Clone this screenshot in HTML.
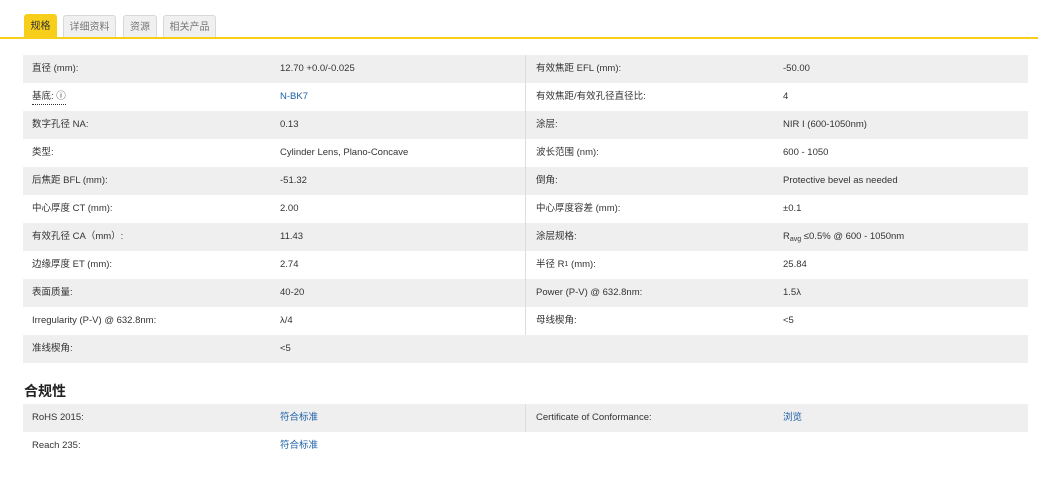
<!DOCTYPE html>
<html><head><meta charset="utf-8"><style>
body{margin:0;background:#fff;font-family:"Liberation Sans","Noto Sans CJK SC",sans-serif;color:#333;font-size:9.5px;}
.tabs{position:absolute;top:14px;left:24px;height:24px;}
.tab{position:absolute;top:1px;height:23px;background:#f0f0f0;border:1px solid #d8d8d8;border-bottom:none;border-radius:3px 3px 0 0;color:#777;font-size:10px;line-height:24px;text-align:center;box-sizing:border-box;}
.tab.on{background:#f7cf1a;border-color:#f7cf1a;color:#333;top:0;height:24px}
.bar{position:absolute;top:37px;left:0;width:1038px;height:2px;background:#f7cf1a}
.t{position:absolute;left:23px;width:1005px;}
.r{height:28px;display:flex;align-items:center;line-height:14px;}
.r:nth-child(odd){background:#efefef}
.r.w{background:#fff}.r.g{background:#efefef}
.r>div{white-space:nowrap;height:28px;display:flex;align-items:center;box-sizing:border-box}
.a{padding-left:9px;width:257px}
.b{width:245px}
.c{padding-left:10px;width:258px;border-left:1px solid #ddd}
a{color:#1d5fa8;text-decoration:none}
h3{position:absolute;left:24px;top:381px;margin:0;font-size:14px;font-weight:bold;color:#222}
</style></head><body>
<div class="tabs">
<div class="tab on" style="left:0;width:33px">规格</div>
<div class="tab" style="left:39px;width:53px">详细资料</div>
<div class="tab" style="left:99px;width:34px">资源</div>
<div class="tab" style="left:139px;width:53px">相关产品</div>
</div>
<div class="bar"></div>
<div class="t" style="top:55px">
<div class="r"><div class="a">直径 (mm):</div><div class="b">12.70 +0.0/-0.025</div><div class="c">有效焦距 EFL (mm):</div><div>-50.00</div></div>
<div class="r"><div class="a"><span style="border-bottom:1px dotted #333">基底: ⓘ</span></div><div class="b"><a>N-BK7</a></div><div class="c">有效焦距/有效孔径直径比:</div><div>4</div></div>
<div class="r"><div class="a">数字孔径 NA:</div><div class="b">0.13</div><div class="c">涂层:</div><div>NIR I (600-1050nm)</div></div>
<div class="r"><div class="a">类型:</div><div class="b">Cylinder Lens, Plano-Concave</div><div class="c">波长范围 (nm):</div><div>600 - 1050</div></div>
<div class="r"><div class="a">后焦距 BFL (mm):</div><div class="b">-51.32</div><div class="c">倒角:</div><div>Protective bevel as needed</div></div>
<div class="r"><div class="a">中心厚度 CT (mm):</div><div class="b">2.00</div><div class="c">中心厚度容差 (mm):</div><div>±0.1</div></div>
<div class="r"><div class="a">有效孔径 CA（mm）:</div><div class="b">11.43</div><div class="c">涂层规格:</div><div>R<span style="font-size:7px;position:relative;top:3px">avg</span>&nbsp;≤0.5% @ 600 - 1050nm</div></div>
<div class="r"><div class="a">边缘厚度 ET (mm):</div><div class="b">2.74</div><div class="c">半径 R<span style="font-size:7px">1</span>&nbsp;(mm):</div><div>25.84</div></div>
<div class="r"><div class="a">表面质量:</div><div class="b">40-20</div><div class="c">Power (P-V) @ 632.8nm:</div><div>1.5λ</div></div>
<div class="r w"><div class="a">Irregularity (P-V) @ 632.8nm:</div><div class="b">λ/4</div><div class="c">母线楔角:</div><div>&lt;5</div></div>
<div class="r g"><div class="a">准线楔角:</div><div class="b">&lt;5</div></div>
</div>
<h3>合规性</h3>
<div class="t" style="top:404px">
<div class="r"><div class="a">RoHS 2015:</div><div class="b"><a>符合标准</a></div><div class="c">Certificate of Conformance:</div><div><a>浏览</a></div></div>
<div class="r w"><div class="a">Reach 235:</div><div class="b"><a>符合标准</a></div></div>
</div>
</body></html>
